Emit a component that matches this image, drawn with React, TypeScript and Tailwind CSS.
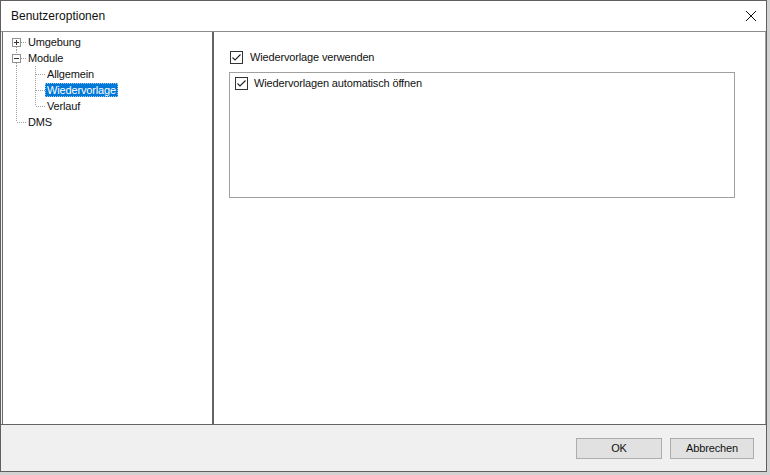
import React from 'react';

const font = { fontFamily: '"Liberation Sans", Arial, sans-serif' };

// Small Windows-style checkbox
const CheckBox: React.FC<{ checked?: boolean }> = ({ checked = true }) => (
  <span className="inline-flex h-[13px] w-[13px] shrink-0 items-center justify-center border border-[#333333] bg-white">
    {checked && (
      <svg width="11" height="11" viewBox="0 0 11 11">
        <polyline points="1.5,5.5 4,8 9.5,2.5" fill="none" stroke="#222222" strokeWidth="1.1" />
      </svg>
    )}
  </span>
);

type Connector = {
  level: 0 | 1;
  box?: '+' | '-';
  rootTop?: boolean; // root vertical line above center
  rootBottom?: boolean; // root vertical line below center
  childTop?: boolean;
  childBottom?: boolean;
};

const dot = { stroke: '#a0a0a0', strokeWidth: 1, strokeDasharray: '1 1' };

// Dotted tree connectors drawn per row
const TreeLines: React.FC<Connector> = ({ level, box, rootTop, rootBottom, childTop, childBottom }) => {
  const w = level === 0 ? 25 : 44;
  return (
    <svg width={w} height="16" className="shrink-0" shapeRendering="crispEdges">
      {level === 0 && (
        <>
          {rootTop && !box && <line x1="13.5" y1="0" x2="13.5" y2="8" {...dot} />}
          {rootTop && box && <line x1="13.5" y1="0" x2="13.5" y2="4" {...dot} />}
          {rootBottom && <line x1="13.5" y1={box ? 13 : 8} x2="13.5" y2="16" {...dot} />}
          <line x1={box ? 18 : 14} y1="8.5" x2="24" y2="8.5" {...dot} />
          {box && (
            <>
              <rect x="9.5" y="4.5" width="8" height="8" fill="white" stroke="#919191" />
              <line x1="11" y1="8.5" x2="16" y2="8.5" stroke="#333" />
              {box === '+' && <line x1="13.5" y1="6" x2="13.5" y2="11" stroke="#333" />}
            </>
          )}
        </>
      )}
      {level === 1 && (
        <>
          <line x1="13.5" y1="0" x2="13.5" y2="16" {...dot} />
          {childTop && <line x1="32.5" y1="0" x2="32.5" y2="8" {...dot} />}
          {childBottom && <line x1="32.5" y1="8" x2="32.5" y2="16" {...dot} />}
          <line x1="33" y1="8.5" x2="43" y2="8.5" {...dot} />
        </>
      )}
    </svg>
  );
};

const TreeRow: React.FC<Connector & { label: string; selected?: boolean }> = ({ label, selected, ...c }) => (
  <div className="flex h-[16px] items-center">
    <TreeLines {...c} />
    <span
      className={
        selected
          ? 'ml-[-2px] flex h-[14px] items-center border border-dotted border-[#9cc8ee] bg-[#0078d7] px-[1px] text-white'
          : 'flex h-[14px] items-center'
      }
    >
      {label}
    </span>
  </div>
);

const App: React.FC = () => {
  return (
    <div className="h-[475px] w-[770px] overflow-hidden bg-[#d2d2d2]" style={font}>
      <div className="flex h-[472px] w-[767px] flex-col border border-[#5f5f5f] bg-[#f0f0f0] text-[11px] tracking-[-0.15px] text-[#111]">
        {/* Title bar */}
        <div className="flex h-[30px] shrink-0 items-center justify-between bg-white pl-[10px] pr-[9px]">
          <span className="text-[12px] tracking-normal">Benutzeroptionen</span>
          <svg width="12" height="12" viewBox="0 0 12 12">
            <line x1="1" y1="1" x2="11" y2="11" stroke="#111" strokeWidth="1" />
            <line x1="11" y1="1" x2="1" y2="11" stroke="#111" strokeWidth="1" />
          </svg>
        </div>
        <div className="h-px shrink-0 bg-[#8c8c8c]" />

        {/* Body */}
        <div className="flex h-[392px] shrink-0 pl-px">
          {/* Tree */}
          <div className="w-[212px] shrink-0 border-l border-r-2 border-l-[#6a6a6a] border-r-[#646464] bg-white pt-[2px]">
            <TreeRow level={0} box="+" rootBottom label="Umgebung" />
            <TreeRow level={0} box="-" rootTop rootBottom label="Module" />
            <TreeRow level={1} childTop childBottom label="Allgemein" />
            <TreeRow level={1} childTop childBottom label="Wiedervorlage" selected />
            <TreeRow level={1} childTop label="Verlauf" />
            <TreeRow level={0} rootTop label="DMS" />
          </div>

          {/* Options */}
          <div className="flex-1 border-r border-[#a3a3a3] bg-white pl-[16px] pt-[19px]">
            <div className="flex h-[13px] items-center gap-[7px]">
              <CheckBox />
              <span>Wiedervorlage verwenden</span>
            </div>
            <div className="mt-[8px] ml-[-1px] h-[126px] w-[506px] border border-[#a0a0a0] pl-[5px] pt-[4px]">
              <div className="flex h-[13px] items-center gap-[6px]">
                <CheckBox />
                <span>Wiedervorlagen automatisch öffnen</span>
              </div>
            </div>
          </div>
        </div>
        <div className="h-px shrink-0 bg-[#646464]" />

        {/* Footer */}
        <div className="flex flex-1 items-center justify-end gap-[8px] pr-[12px]">
          <button className="flex h-[21px] w-[86px] items-center justify-center border border-[#adadad] bg-[#e1e1e1]">
            OK
          </button>
          <button className="flex h-[21px] w-[84px] items-center justify-center border border-[#adadad] bg-[#e1e1e1]">
            Abbrechen
          </button>
        </div>
      </div>
    </div>
  );
};

export default App;
